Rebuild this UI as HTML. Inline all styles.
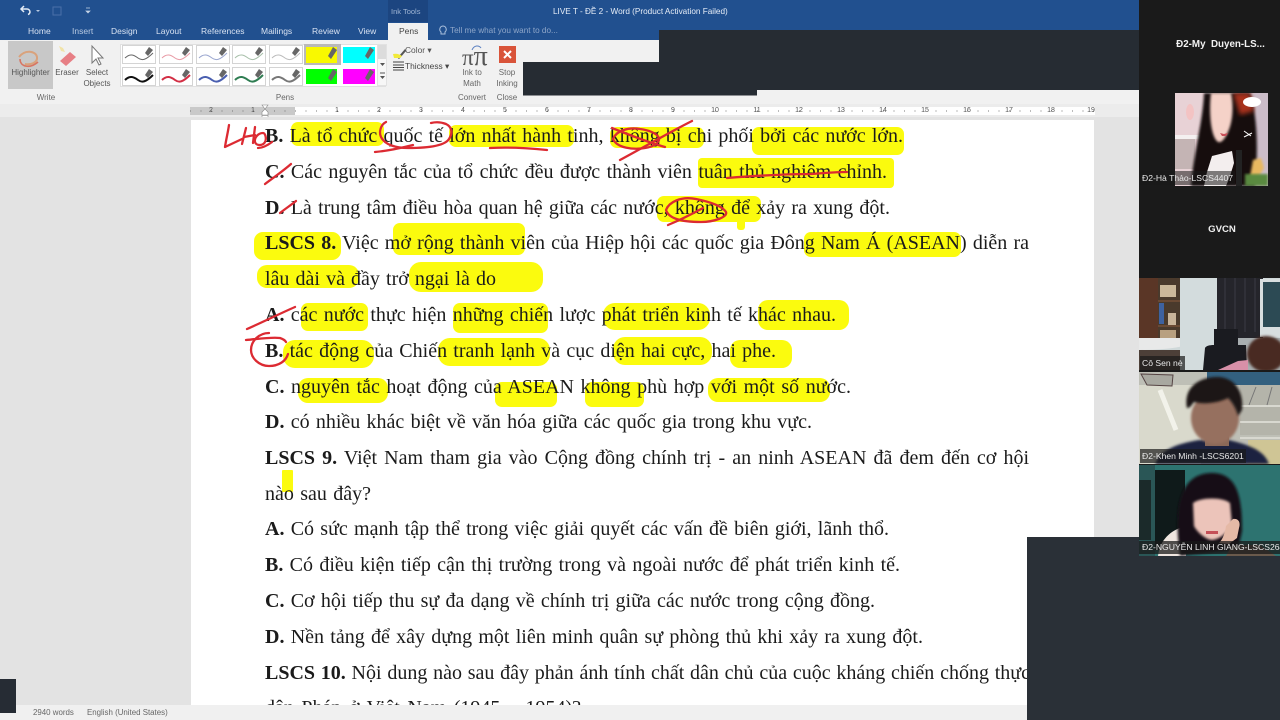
<!DOCTYPE html>
<html lang="vi"><head><meta charset="utf-8"><title>LIVE T - ĐỀ 2 - Word</title>
<style>
*{margin:0;padding:0;box-sizing:border-box}
html,body{width:1280px;height:720px;overflow:hidden;background:#e3e3e3}
#root{position:absolute;left:0;top:0;width:1280px;height:720px;overflow:hidden;filter:blur(.35px);font-family:"Liberation Sans",sans-serif}
.a{position:absolute}
.l{position:absolute;left:265px;height:36px;font:20px/36px "Liberation Serif","Noto Serif CJK SC",serif;color:#1b1b1b;white-space:nowrap;text-align:justify;text-align-last:justify}
.h{position:absolute;background:#fbfb0e;border-radius:7px}
.t{position:absolute;white-space:nowrap;font-size:8.5px;color:#d8e2f2;line-height:12px}
.r{position:absolute;white-space:nowrap;font-size:8px;color:#555;line-height:10px;text-align:center}
.q{position:absolute;top:106px;width:10px;white-space:nowrap;font-size:7px;color:#555;line-height:10px;text-align:center}
.n{position:absolute;white-space:nowrap;font-size:8.6px;color:#e8e8e8;line-height:14px;padding:0 2px}
</style></head><body><div id="root">
<!-- title bar -->
<div class="a" style="left:0;top:0;width:1139px;height:40px;background:#21508f"></div>
<div class="a" style="left:388px;top:0;width:40px;height:22px;background:#1c4580"></div>
<div class="t" style="left:391px;top:6px;font-size:7.5px;color:#9fb4d3">Ink Tools</div>
<div class="t" style="left:553px;top:6px;font-size:8.2px;color:#e6edf7">LIVE T - ĐỀ 2 - Word (Product Activation Failed)</div>
<svg class="a" style="left:16px;top:3px" width="90" height="16"><path d="M6 6l-3 3 3 3M3 9h6a3 3 0 0 1 3 3 3 3 0 0 1-2 2.600" transform="translate(2,-3)" fill="none" stroke="#e4ecf6" stroke-width="1.500"/><path d="M20 7h4l-2 2z" fill="#b7c8e0"/><rect x="37" y="4" width="8" height="8" fill="none" stroke="#4a70a8"/><path d="M70 5h4M70 8h4l-2 2z" fill="#c5d3e6" stroke="#c5d3e6" stroke-width=".7"/></svg>
<div class="t" style="left:28px;top:25px">Home</div><div class="t" style="left:72px;top:25px;color:#b9cae2">Insert</div><div class="t" style="left:111px;top:25px">Design</div><div class="t" style="left:156px;top:25px">Layout</div><div class="t" style="left:201px;top:25px">References</div><div class="t" style="left:261px;top:25px">Mailings</div><div class="t" style="left:312px;top:25px">Review</div><div class="t" style="left:358px;top:25px">View</div>
<div class="a" style="left:388px;top:23px;width:40px;height:18px;background:#f1f1f1"></div>
<div class="t" style="left:399px;top:25px;color:#444">Pens</div>
<div class="t" style="left:450px;top:25px;color:#8ea6c9;font-size:8.2px">Tell me what you want to do...</div>
<svg class="a" style="left:438px;top:25px" width="10" height="12"><path d="M5 1a3.400 3.400 0 0 0-2 6v2h4V7a3.400 3.400 0 0 0-2-6z" fill="none" stroke="#a9bfdc"/></svg>
<!-- ribbon -->
<div class="a" style="left:0;top:40px;width:1139px;height:64px;background:#f1f1f1"></div>
<div class="a" style="left:8px;top:41px;width:45px;height:48px;background:#c8c8c8"></div>
<svg class="a" style="left:0;top:40px" width="120" height="42"><path d="M19 17c6-8 17-6 18 0s-7 8-12 7" fill="none" stroke="#d9a27c" stroke-width="2"/><path d="M20 19c0 8 10 10 18 3" fill="none" stroke="#d77562" stroke-width="1.600"/><path d="M60 21l10-9 6 5-10 9z" fill="#e77f85"/><path d="M59 6l4 2 2 4-4-1z" fill="#f1e3a8"/><path d="M92 6v17l4-4 3 6 2-1-3-6h5z" fill="#fff" stroke="#777"/></svg>
<div class="r" style="left:8px;top:68px;width:45px;color:#555">Highlighter</div>
<div class="r" style="left:54px;top:68px;width:26px">Eraser</div>
<div class="r" style="left:81px;top:68px;width:32px">Select</div><div class="r" style="left:81px;top:79px;width:32px">Objects</div>
<div class="r" style="left:30px;top:93px;width:32px;color:#666">Write</div><div class="r" style="left:268px;top:93px;width:34px;color:#666">Pens</div>
<div class="a" style="left:120px;top:44px;width:266px;height:43px;background:#fff;border:1px solid #e0e0e0"></div>
<svg class="a" style="left:120px;top:44px" width="262" height="42">
<g fill="none">
<g stroke-width="1">
<path d="M5 14c5-5 9-3 13 0s8 2 15-5" stroke="#666"/>
<path d="M42 14c5-5 9-3 13 0s8 2 15-5" stroke="#e89aa5"/>
<path d="M79 14c5-5 9-3 13 0s8 2 15-5" stroke="#9aa6cf"/>
<path d="M115 14c5-5 9-3 13 0s8 2 15-5" stroke="#a7bfa9"/>
<path d="M152 14c5-5 9-3 13 0s8 2 15-5" stroke="#bbb"/>
</g>
<g stroke-width="2">
<path d="M5 36c5-5 9-3 13 0s8 2 15-5" stroke="#111"/>
<path d="M42 36c5-5 9-3 13 0s8 2 15-5" stroke="#d32f45"/>
<path d="M79 36c5-5 9-3 13 0s8 2 15-5" stroke="#4a5fb0"/>
<path d="M115 36c5-5 9-3 13 0s8 2 15-5" stroke="#2f7d52"/>
<path d="M152 36c5-5 9-3 13 0s8 2 15-5" stroke="#777"/>
</g></g>
<g stroke="#d4d4d4" fill="none"><rect x="2.500" y="1.500" width="33" height="18"/><rect x="39.500" y="1.500" width="33" height="18"/><rect x="76.500" y="1.500" width="33" height="18"/><rect x="112.500" y="1.500" width="33" height="18"/><rect x="149.500" y="1.500" width="33" height="18"/>
<rect x="2.500" y="23.500" width="33" height="18"/><rect x="39.500" y="23.500" width="33" height="18"/><rect x="76.500" y="23.500" width="33" height="18"/><rect x="112.500" y="23.500" width="33" height="18"/><rect x="149.500" y="23.500" width="33" height="18"/></g>
<rect x="184" y="0" width="37" height="21" fill="#b9b9b9"/>
<rect x="186" y="3" width="31" height="16" fill="#f9f900"/><rect x="223" y="3" width="32" height="16" fill="#0ff"/>
<rect x="186" y="25" width="31" height="15" fill="#0f0"/><rect x="223" y="25" width="32" height="15" fill="#f0f"/>
<g fill="#666"><path d="M29 3l4 3-5 6-3-3zM66 3l4 3-5 6-3-3zM103 3l4 3-5 6-3-3zM139 3l4 3-5 6-3-3zM176 3l4 3-5 6-3-3zM213 3l4 3-6 9-3-3zM250 3l4 3-6 9-3-3zM29 25l4 3-5 6-3-3zM66 25l4 3-5 6-3-3zM103 25l4 3-5 6-3-3zM139 25l4 3-5 6-3-3zM176 25l4 3-5 6-3-3zM213 25l4 3-6 9-3-3zM250 25l4 3-6 9-3-3z"/></g>
</svg>
<div class="a" style="left:377px;top:44px;width:10px;height:42px;background:#f7f7f7;border:1px solid #e2e2e2"></div>
<div class="a" style="left:378px;top:45px;width:8px;height:14px;background:#dcdcdc"></div>
<svg class="a" style="left:378px;top:60px" width="9" height="24"><path d="M2 3h5l-2.500 3zM2 16h5l-2.500 3z" fill="#555"/><path d="M2 13h5" stroke="#555"/></svg>
<svg class="a" style="left:392px;top:43px" width="22" height="30"><path d="M2 12l4 2 1-1 6-7 1 2-6 7-1 1z" fill="#555"/><path d="M1 11q5-1 9 2l-2 2H2z" fill="#f1ea3a"/><path d="M1 22h11M1 24.500h11M1 27h11" stroke="#444" stroke-width="1"/><path d="M1 19h11" stroke="#444" stroke-width="1"/></svg>
<div class="r" style="left:405px;top:45px;font-size:8.4px">Color ▾</div><div class="r" style="left:405px;top:61px;font-size:8.4px;color:#444">Thickness ▾</div>
<div class="a" style="left:462px;top:44px;font:23px/26px 'Liberation Serif',serif;color:#555;white-space:nowrap">π<span style="font-size:28px">π</span></div>
<svg class="a" style="left:470px;top:43px" width="16" height="10"><path d="M2 7c2-5 7-5 9-2" fill="none" stroke="#5a7fc0"/></svg>
<div class="r" style="left:458px;top:68px;width:28px;color:#666">Ink to</div><div class="r" style="left:458px;top:79px;width:28px;color:#666">Math</div><div class="r" style="left:456px;top:93px;width:32px;color:#666">Convert</div>
<div class="a" style="left:499px;top:46px;width:17px;height:17px;background:#d9543a"></div>
<svg class="a" style="left:499px;top:46px" width="17" height="17"><path d="M5 5l7 7M12 5l-7 7" stroke="#fff" stroke-width="2"/></svg>
<div class="r" style="left:493px;top:68px;width:28px;color:#666">Stop</div><div class="r" style="left:493px;top:79px;width:28px;color:#666">Inking</div><div class="r" style="left:493px;top:93px;width:28px;color:#666">Close</div>
<!-- dark overlay -->
<svg class="a" style="left:0;top:0" width="1139" height="104"><path d="M659 30H1139V90H757V95.500H523V62H659Z" fill="#262c33"/></svg>
<!-- ruler -->
<div class="a" style="left:0;top:104px;width:1139px;height:13px;background:#ececec"></div>
<div class="a" style="left:190px;top:107px;width:905px;height:8px;background:#fff"></div>
<div class="a" style="left:190px;top:107px;width:105px;height:8px;background:#c9c9c9"></div>
<svg class="a" style="left:190px;top:107px" width="905" height="8"><path d="M0 4H905" stroke="#777" stroke-width="1" stroke-dasharray="1 9.500"/></svg>
<div class="q" style="left:206px">2</div><div class="q" style="left:248px">1</div>
<div class="q" style="left:332px">1</div><div class="q" style="left:374px">2</div><div class="q" style="left:416px">3</div><div class="q" style="left:458px">4</div><div class="q" style="left:500px">5</div><div class="q" style="left:542px">6</div><div class="q" style="left:584px">7</div><div class="q" style="left:626px">8</div><div class="q" style="left:668px">9</div><div class="q" style="left:710px">10</div><div class="q" style="left:752px">11</div><div class="q" style="left:794px">12</div><div class="q" style="left:836px">13</div><div class="q" style="left:878px">14</div><div class="q" style="left:920px">15</div><div class="q" style="left:962px">16</div><div class="q" style="left:1004px">17</div><div class="q" style="left:1046px">18</div><div class="q" style="left:1086px">19</div>
<svg class="a" style="left:260px;top:104px" width="10" height="16"><path d="M2 1h6L5 5zM2 8l3-3 3 3v3H2z" fill="#fff" stroke="#888" stroke-width=".6"/><rect x="2" y="11.500" width="6" height="4" fill="#fff" stroke="#888" stroke-width=".6"/></svg>
<!-- doc -->
<div class="a" style="left:0;top:117px;width:1139px;height:589px;background:#e3e3e3"></div>
<div class="a" style="left:191px;top:120px;width:903px;height:586px;background:#fff"></div>
<!-- highlights -->
<div class="h" style="left:291px;top:122px;width:93px;height:24px"></div>
<div class="h" style="left:449px;top:125px;width:125px;height:22px"></div>
<div class="h" style="left:610px;top:127px;width:94px;height:21px"></div>
<div class="h" style="left:752px;top:127px;width:152px;height:28px"></div>
<div class="h" style="left:698px;top:158px;width:196px;height:30px;border-radius:4px"></div>
<div class="h" style="left:657px;top:196px;width:104px;height:26px"></div>
<div class="h" style="left:737px;top:218px;width:8px;height:12px;border-radius:3px"></div>
<div class="h" style="left:254px;top:232px;width:87px;height:28px;border-radius:9px"></div>
<div class="h" style="left:393px;top:223px;width:132px;height:32px"></div>
<div class="h" style="left:804px;top:232px;width:157px;height:25px"></div>
<div class="h" style="left:257px;top:265px;width:102px;height:23px;border-radius:10px"></div>
<div class="h" style="left:409px;top:262px;width:134px;height:30px;border-radius:12px"></div>
<div class="h" style="left:301px;top:303px;width:67px;height:28px"></div>
<div class="h" style="left:453px;top:303px;width:95px;height:30px"></div>
<div class="h" style="left:603px;top:303px;width:107px;height:27px;border-radius:12px"></div>
<div class="h" style="left:758px;top:300px;width:91px;height:30px;border-radius:10px"></div>
<div class="h" style="left:283px;top:340px;width:91px;height:28px;border-radius:12px"></div>
<div class="h" style="left:438px;top:338px;width:112px;height:28px;border-radius:12px"></div>
<div class="h" style="left:613px;top:337px;width:99px;height:28px;border-radius:12px"></div>
<div class="h" style="left:730px;top:340px;width:62px;height:28px;border-radius:10px"></div>
<div class="h" style="left:298px;top:378px;width:90px;height:25px;border-radius:10px"></div>
<div class="h" style="left:495px;top:382px;width:62px;height:25px"></div>
<div class="h" style="left:585px;top:382px;width:59px;height:25px"></div>
<div class="h" style="left:708px;top:378px;width:122px;height:24px;border-radius:10px"></div>
<div class="h" style="left:282px;top:470px;width:11px;height:22px;border-radius:1px"></div>
<!-- text -->
<div class="l" style="top:118px;width:638px"><b>B.</b> Là tổ chức quốc tế lớn nhất hành tinh, không bị chi phối bởi các nước lớn.</div>
<div class="l" style="top:154px;width:622px"><b>C.</b> Các nguyên tắc của tổ chức đều được thành viên tuân thủ nghiêm chỉnh.</div>
<div class="l" style="top:190px;width:625px"><b>D.</b> Là trung tâm điều hòa quan hệ giữa các nước, không để xảy ra xung đột.</div>
<div class="l" style="top:225px;width:764px"><b>LSCS 8.</b> Việc mở rộng thành viên của Hiệp hội các quốc gia Đông Nam Á (ASEAN) diễn ra</div>
<div class="l" style="top:261px;width:231px">lâu dài và đầy trở ngại là do</div>
<div class="l" style="top:297px;width:571px"><b>A.</b> các nước thực hiện những chiến lược phát triển kinh tế khác nhau.</div>
<div class="l" style="top:333px;width:511px"><b>B.</b> tác động của Chiến tranh lạnh và cục diện hai cực, hai phe.</div>
<div class="l" style="top:369px;width:586px"><b>C.</b> nguyên tắc hoạt động của ASEAN không phù hợp với một số nước.</div>
<div class="l" style="top:404px;width:547px"><b>D.</b> có nhiều khác biệt về văn hóa giữa các quốc gia trong khu vực.</div>
<div class="l" style="top:440px;width:764px"><b>LSCS 9.</b> Việt Nam tham gia vào Cộng đồng chính trị - an ninh ASEAN đã đem đến cơ hội</div>
<div class="l" style="top:476px;width:106px">nào sau đây?</div>
<div class="l" style="top:511px;width:624px"><b>A.</b> Có sức mạnh tập thể trong việc giải quyết các vấn đề biên giới, lãnh thổ.</div>
<div class="l" style="top:547px;width:635px"><b>B.</b> Có điều kiện tiếp cận thị trường trong và ngoài nước để phát triển kinh tế.</div>
<div class="l" style="top:583px;width:610px"><b>C.</b> Cơ hội tiếp thu sự đa dạng về chính trị giữa các nước trong cộng đồng.</div>
<div class="l" style="top:619px;width:658px"><b>D.</b> Nền tảng để xây dựng một liên minh quân sự phòng thủ khi xảy ra xung đột.</div>
<div class="l" style="top:655px;width:765px"><b>LSCS 10.</b> Nội dung nào sau đây phản ánh tính chất dân chủ của cuộc kháng chiến chống thực</div>
<div class="l" style="top:690px;width:316px">dân Pháp ở Việt Nam (1945 – 1954)?</div>
<!-- ink -->
<svg class="a" style="left:0;top:0" width="1139" height="720"><g fill="none" stroke="#dc2a32" stroke-width="2.300" stroke-linecap="round" stroke-linejoin="round">
<path d="M229 125c-1 7-3 15-4 22l17-8"/><path d="M246 128l-4 16M244 137l11-2M255 127l-2 16"/><path d="M263 133c-5 0-9 5-8 9s8 4 10 0 0-9-2-9zM258 148c5 0 10-3 14-6"/>
<path d="M386 122c-6 3-7 11-5 15 4 8 15 11 27 11 14 0 36-1 41-9 4-6 3-12-3-15-5-2-11-2-15-1"/><path d="M375 152c12-1 26-4 38-7"/><path d="M490 148c18-1 38 0 57 2"/>
<path d="M613 139c3-8 15-12 27-10 8 1 17 4 19 9 1 4-5 9-14 10-12 2-28 0-32-9z"/><path d="M620 160c26-14 50-28 72-39"/><path d="M612 128c15 6 35 14 53 19"/>
<path d="M265 184c8-6 18-13 26-20"/>
<path d="M280 213c5-4 11-8 16-12"/>
<path d="M727 178c25-2 55-4 85-4 12-1 24-2 35-2"/>
<path d="M666 210c3-8 15-14 30-11 15 3 26 7 30 13 2 5-12 10-25 10-15 0-32-2-35-12z"/><path d="M668 225c12-5 24-11 35-17"/>
<path d="M247 329c16-7 32-15 48-22"/>
<path d="M246 340c12-1 24-3 34-2 3 1 5 2 6 4M269 333c-10 0-18 8-18 17 0 8 8 16 18 16 10 0 17-5 19-12"/>
</g></svg>
<!-- status bar -->
<div class="a" style="left:0;top:705px;width:1139px;height:15px;background:#f0f0f0"></div>
<div class="r" style="left:33px;top:708px;color:#666;font-size:7.9px">2940 words</div>
<div class="r" style="left:87px;top:708px;color:#666;font-size:7.9px">English (United States)</div>
<div class="a" style="left:0;top:679px;width:16px;height:34px;background:#262c34"></div>
<!-- right panel -->
<div class="a" style="left:1139px;top:0;width:141px;height:720px;background:#1a1a1a"></div>
<div class="a" style="left:1027px;top:537px;width:253px;height:183px;background:#2a3037"></div>
<div class="a" style="left:1139px;top:37px;width:141px;height:16px;text-align:center;font:bold 9.800px/16px 'Liberation Sans',sans-serif;color:#f2f2f2;white-space:pre;padding-left:22px">Đ2-My  Duyen-LS...</div>
<div class="a" style="left:1139px;top:222px;width:166px;text-align:center;font:bold 9.600px/16px 'Liberation Sans',sans-serif;color:#efefef">GVCN</div>
<svg class="a" style="left:1139px;top:90px" width="141" height="470" viewBox="1139 90 141 470">
<defs><filter id="b"><feGaussianBlur stdDeviation="1.200"/></filter><filter id="c"><feGaussianBlur stdDeviation="2.400"/></filter>
<clipPath id="p1"><rect x="1175" y="93" width="93" height="93"/></clipPath><clipPath id="p2"><rect x="1139" y="278" width="141" height="92"/></clipPath><clipPath id="p3"><rect x="1139" y="372" width="141" height="92"/></clipPath><clipPath id="p4"><rect x="1139" y="465" width="141" height="91"/></clipPath></defs>
<g clip-path="url(#p1)"><rect x="1175" y="93" width="93" height="93" fill="#e8d2d6"/><rect x="1240" y="93" width="28" height="93" fill="#cbbcc8"/><rect x="1175" y="135" width="28" height="4" fill="#f4f0f0"/><rect x="1175" y="139" width="20" height="30" fill="#c4b4b4"/>
<path d="M1204 93h46c8 25 8 60 5 93h-64c2-30 12-65 13-93z" fill="#16100f" filter="url(#b)"/><path d="M1233 93h17l4 18-14 4z" fill="#a8311c" filter="url(#c)"/>
<path d="M1211 93h20c3 14 2 34-7 46-3 4-6 4-8 1-6-8-7-32-5-47z" fill="#f5d2c8" filter="url(#b)"/><path d="M1220 133l4 1 4-1-2 3h-4z" fill="#c94f58"/>
<polygon points="1207,172 1212,156 1232,151 1234,163 1230,176 1226,186 1204,186" fill="#f3eeee"/><rect x="1236" y="150" width="6" height="36" fill="#222"/><ellipse cx="1252" cy="102" rx="9" ry="5" fill="#fff"/><ellipse cx="1190" cy="112" rx="4" ry="8" fill="#f3c3c3"/><path d="M1253 160l8-2 3 10-6 10-9 4z" fill="#e8b860" filter="url(#b)"/><rect x="1245" y="174" width="23" height="12" fill="#5a8a40" filter="url(#b)"/><path d="M1244 137l8-4M1244 131l7 5" stroke="#fff"/></g>
<g clip-path="url(#p2)"><rect x="1139" y="278" width="141" height="92" fill="#cfd8d9"/><rect x="1139" y="278" width="19" height="60" fill="#5a3626"/><rect x="1158" y="278" width="22" height="60" fill="#4a3a2c"/><rect x="1160" y="285" width="16" height="12" fill="#cbb89a"/><rect x="1158" y="300" width="22" height="2" fill="#6a4a34"/><rect x="1159" y="303" width="5" height="21" fill="#3e62a0"/><rect x="1168" y="313" width="8" height="12" fill="#c8b49a"/><rect x="1158" y="325" width="22" height="2" fill="#6a4a34"/><rect x="1160" y="330" width="16" height="8" fill="#b8a080"/>
<rect x="1139" y="350" width="60" height="20" fill="#4c3f38"/><path d="M1139 338h49v7c-15 4-35 5-49 5z" fill="#e8e9e9"/>
<rect x="1180" y="278" width="37" height="92" fill="#d3dcdd"/><rect x="1217" y="278" width="46" height="60" fill="#25252b"/><path d="M1225 278v54M1235 278v54M1245 278v54M1255 278v54" stroke="#3c3c44"/><rect x="1260" y="279" width="20" height="58" fill="#d8dedf"/><rect x="1263" y="282" width="17" height="45" fill="#2c4a54"/><rect x="1217" y="338" width="63" height="32" fill="#a8aeb0"/>
<path d="M1214 329h24v16h8l1 25h-44l2-22c1-2 4-3 9-3z" fill="#1a1b20"/><ellipse cx="1266" cy="354" rx="19" ry="18" fill="#4a2a22" filter="url(#b)"/><path d="M1218 370l20-9 10-1v10z" fill="#d890a8"/></g>
<g clip-path="url(#p3)"><rect x="1139" y="372" width="141" height="92" fill="#bebfb6"/><rect x="1139" y="385" width="62" height="79" fill="#d9d9cc"/><path d="M1207 372h73v13h-73z" fill="#33607f"/><path d="M1240 385h40v50h-40z" fill="#b4b4aa"/><path d="M1240 406h40M1240 422h40M1240 438h40" stroke="#d8d8d0" stroke-width="2"/><path d="M1256 387l-7 18M1272 387l-5 18" stroke="#777"/><rect x="1248" y="440" width="32" height="24" fill="#cfc595"/><path d="M1141 374l32 1-1 11-25-1z" fill="#a8a8a0" stroke="#544"/><path d="M1160 390l16 40" stroke="#f2f2ea" stroke-width="5"/>
<path d="M1155 464c6-14 20-20 44-24h30c20 5 35 10 40 24z" fill="#1a2340" filter="url(#b)"/><rect x="1205" y="434" width="24" height="12" fill="#8a6858"/>
<ellipse cx="1215" cy="418" rx="24" ry="26" fill="#96705f" filter="url(#b)"/><path d="M1187 408c-4-22 14-31 30-31 18 0 27 15 25 33l-4 6c-2-8-6-14-10-18-12 6-26 6-34 4-3 4-4 6-7 6z" fill="#1c1512" filter="url(#b)"/><path d="M1206 434h18" stroke="#6a3e36" stroke-width="2" filter="url(#b)"/></g>
<g clip-path="url(#p4)"><rect x="1139" y="465" width="141" height="91" fill="#2d7370"/><rect x="1139" y="465" width="16" height="91" fill="#2a5656"/><rect x="1155" y="470" width="30" height="80" fill="#0f1a1a"/><rect x="1139" y="480" width="12" height="60" fill="#1b2a2a"/>
<path d="M1158 556c2-16 12-26 28-30v30z" fill="#efe6e0"/><path d="M1180 556c-4-30-8-83 32-83 28 0 30 30 30 58l-4 19-60 6z" fill="#141012" filter="url(#b)"/><path d="M1193 503c8-6 30-6 37 0l2 22c-4 8-14 15-20 15s-15-8-18-14z" fill="#ecc4ba" filter="url(#b)"/><path d="M1206 531h12v3h-12z" fill="#c55058"/><path d="M1226 526l7-7c5-1 8 3 6 9l-2 10-8 6-10-1c4-4 6-10 7-17z" fill="#e5b9a6"/><path d="M1232 545h28l16 11h-50z" fill="#6a5a4c"/></g>
</svg>
<div class="n" style="left:1140px;top:171px;background:rgba(25,25,25,.55)">Đ2-Hà Thảo-LSCS4407</div>
<div class="n" style="left:1140px;top:356px;background:rgba(25,25,25,.7)">Cô Sen nè</div>
<div class="n" style="left:1140px;top:449px;background:rgba(25,25,25,.7)">Đ2-Khen Minh -LSCS6201</div>
<div class="a" style="left:1139px;top:541px;width:141px;height:13px;overflow:hidden;background:rgba(25,25,25,.75)"><div class="n" style="left:1px;top:-1px">Đ2-NGUYỄN LINH GIANG-LSCS2645</div></div>
</div></body></html>
